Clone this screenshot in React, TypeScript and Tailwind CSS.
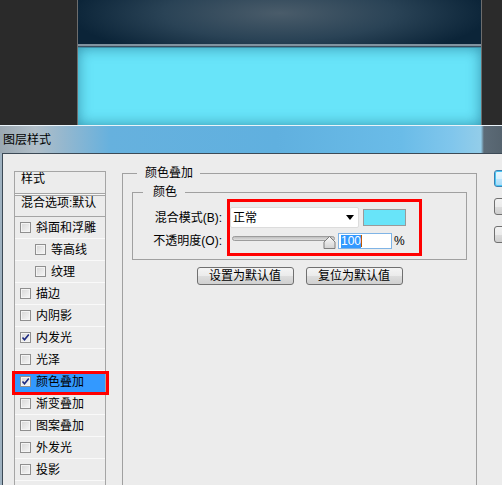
import React from "react"

const items: { label: string; checked?: boolean; indent?: boolean; active?: boolean }[] = [
    { label: "斜面和浮雕" },
    { label: "等高线", indent: true },
    { label: "纹理", indent: true },
    { label: "描边" },
    { label: "内阴影" },
    { label: "内发光", checked: true },
    { label: "光泽" },
    { label: "颜色叠加", checked: true, active: true },
    { label: "渐变叠加" },
    { label: "图案叠加" },
    { label: "外发光" },
    { label: "投影" },
]

function CheckBox({ checked }: { checked?: boolean }) {
    return (
        <span className="w-[11px] h-[11px] shrink-0 border border-[#8f8f8f] bg-[linear-gradient(135deg,#d6d6d6,#f7f7f7)] shadow-[inset_0_0_0_1px_#f4f4f4] flex items-center justify-center">
            {checked && (
                <svg width="9" height="9" viewBox="0 0 9 9">
                    <path d="M1.5 4.5 L3.5 6.8 L7.8 1.5" fill="none" stroke="#1c2a80" strokeWidth="1.6" />
                </svg>
            )}
        </span>
    )
}

function StyleRow({ label, checked, indent, active }: { label: string; checked?: boolean; indent?: boolean; active?: boolean }) {
    return (
        <div
            className={`relative h-[22px] flex items-center gap-[5px] border-b border-[#f9f9f9] ${indent ? "pl-[20px]" : "pl-[5px]"} ${active ? "bg-[#3399ff]" : ""}`}
        >
            <CheckBox checked={checked} />
            <span className="leading-[14px]">{label}</span>
            {active && <div className="absolute left-[-3px] top-0 w-[97px] h-[24px] border-[3px] border-[#ff0000] z-10" />}
        </div>
    )
}

function GrayButton({ children, className = "" }: { children?: React.ReactNode; className?: string }) {
    return (
        <div
            className={`h-[18px] rounded-[3px] border border-[#707070] bg-[linear-gradient(180deg,#f4f4f4_0%,#ebebeb_50%,#dddddd_51%,#d0d0d0_100%)] flex items-center justify-center leading-[14px] ${className}`}
        >
            {children}
        </div>
    )
}

export default function App() {
    return (
        <div className="w-[502px] h-[485px] overflow-hidden flex flex-col bg-[#2a2a2a] text-[12px] text-black font-['Liberation_Sans','Noto_Sans_CJK_SC',sans-serif]">
            {/* canvas strip behind the dialog */}
            <div className="h-[125px] shrink-0 flex">
                <div className="w-[77px] bg-[#2a2a2a]" />
                <div className="flex-1 flex flex-col border-x border-[#6d6d6d]">
                    <div className="h-[44px] bg-[radial-gradient(ellipse_52%_110%_at_50%_30%,#4a5c6a_0%,#2a4356_55%,#0b2438_100%)]" />
                    <div className="h-[3px] bg-[#8193a0] border-b border-[#3c5060]" />
                    <div className="flex-1 bg-[#68e4f9] border-t border-[#3a8ca4] shadow-[inset_0_0_14px_rgba(20,95,125,0.6)]" />
                </div>
                <div className="w-[20px] bg-[#2b2b2b]" />
            </div>

            {/* title bar */}
            <div className="h-[28px] shrink-0 border-t border-[#eaf3f9] flex items-center pl-[3px] text-[12px] leading-[14px] bg-[linear-gradient(90deg,#9ba8b2_0%,#b0bec8_7%,#93b7cf_13%,#66b1de_22%,#60b0df_55%,#6abce8_80%,#80c6ec_90%,#93cde9_95.8%,#5c6b77_96.4%,#55636e_100%)]">
                图层样式
            </div>

            {/* dialog body */}
            <div className="flex-1 flex pl-[2px] bg-[#9fb2c1]">
                <div className="flex-1 flex items-start border-l border-t border-[#3c4a56] bg-[#ececec] pt-[12px] pl-[11px]">
                    {/* styles list */}
                    <div className="w-[92px] h-[340px] shrink-0 mt-[5px] border-x border-t border-[#a5a5a5]">
                        <div className="h-[21px] pl-[6px] leading-[14px]">样式</div>
                        <div className="h-[3px] border-y border-[#a5a5a5] bg-[#f7f7f7]" />
                        <div className="h-[21px] pl-[6px] leading-[14px] border-b border-[#a5a5a5]">混合选项:默认</div>
                        {items.map((it) => (
                            <StyleRow key={it.label} {...it} />
                        ))}
                    </div>

                    {/* colour overlay settings */}
                    <fieldset className="w-[355px] h-[340px] shrink-0 ml-[16px] border border-[#a0a0a0]">
                        <legend className="ml-[14px] pl-[8px] pr-[7px] leading-[14px]">颜色叠加</legend>
                        <fieldset className="mx-[9px] mt-[5px] pb-[3px] border border-[#a0a0a0]">
                            <legend className="ml-[10px] pl-[10px] pr-[8px] leading-[14px]">颜色</legend>
                            <div className="flex pl-[19px]">
                                <div className="w-[70px] flex flex-col items-end leading-[14px]">
                                    <span className="mt-[12px]">混合模式(B):</span>
                                    <span className="mt-[9px]">不透明度(O):</span>
                                </div>
                                <div className="ml-[5px] border-[3px] border-[#ff0000] pt-[5px] pr-[13px] pb-[4px]">
                                    <div className="flex items-center gap-[4px]">
                                        <div className="w-[129px] h-[21px] bg-white border border-[#dcdcdc] rounded-[2px] flex items-center pl-[2px] leading-[14px]">
                                            正常
                                            <svg className="ml-auto mr-[4px]" width="8" height="5" viewBox="0 0 8 5">
                                                <path d="M0 0 H8 L4 5 Z" fill="#000" />
                                            </svg>
                                        </div>
                                        <div className="w-[43px] h-[17px] bg-[#68e4f9] border border-[#9a9a9a]" />
                                    </div>
                                    <div className="flex items-center mt-[5px]">
                                        <svg className="ml-[2px]" width="104" height="16" viewBox="0 0 104 16">
                                            <defs>
                                                <linearGradient id="trk" x1="0" y1="0" x2="0" y2="1">
                                                    <stop offset="0" stopColor="#b9b9b9" />
                                                    <stop offset="1" stopColor="#e4e4e4" />
                                                </linearGradient>
                                                <linearGradient id="thm" x1="0" y1="0" x2="0" y2="1">
                                                    <stop offset="0" stopColor="#fbfbfb" />
                                                    <stop offset="1" stopColor="#d2d2d2" />
                                                </linearGradient>
                                            </defs>
                                            <rect x="0.5" y="3.5" width="102" height="4" rx="2" fill="url(#trk)" stroke="#9c9c9c" />
                                            <path d="M97.5 3.5 L103 9 V15.5 H92 V9 Z" fill="url(#thm)" stroke="#7d7d7d" />
                                        </svg>
                                        <div className="ml-[2px] w-[54px] h-[16px] bg-white border border-[#7fb4e6] flex items-center pl-[2px]">
                                            <span className="bg-[#3399ff] text-white leading-[13px] px-[0px]">100</span>
                                            <span className="w-[1px] h-[12px] bg-[#c05a00]" />
                                        </div>
                                        <span className="ml-[2px] leading-[14px]">%</span>
                                    </div>
                                </div>
                            </div>
                        </fieldset>
                        <div className="flex justify-center gap-[12px] mt-[7px]">
                            <GrayButton className="w-[97px]">设置为默认值</GrayButton>
                            <GrayButton className="w-[97px]">复位为默认值</GrayButton>
                        </div>
                    </fieldset>

                    {/* dialog buttons, cut off at the right edge */}
                    <div className="ml-[17px] mt-[4px] w-[80px] shrink-0 flex flex-col gap-[11px]">
                        <div className="h-[17px] rounded-[3px] border border-[#3c7fb1] bg-[linear-gradient(180deg,#eaf6fd_0%,#d9f0fc_50%,#bee6fd_51%,#a7d9f5_100%)] shadow-[inset_0_0_0_1px_#48c8f5]" />
                        <div className="h-[17px] rounded-[3px] border border-[#707070] bg-[linear-gradient(180deg,#f2f2f2_0%,#ebebeb_50%,#dddddd_51%,#cfcfcf_100%)]" />
                        <div className="h-[17px] rounded-[3px] border border-[#707070] bg-[linear-gradient(180deg,#f2f2f2_0%,#ebebeb_50%,#dddddd_51%,#cfcfcf_100%)]" />
                    </div>
                </div>
            </div>
        </div>
    )
}
